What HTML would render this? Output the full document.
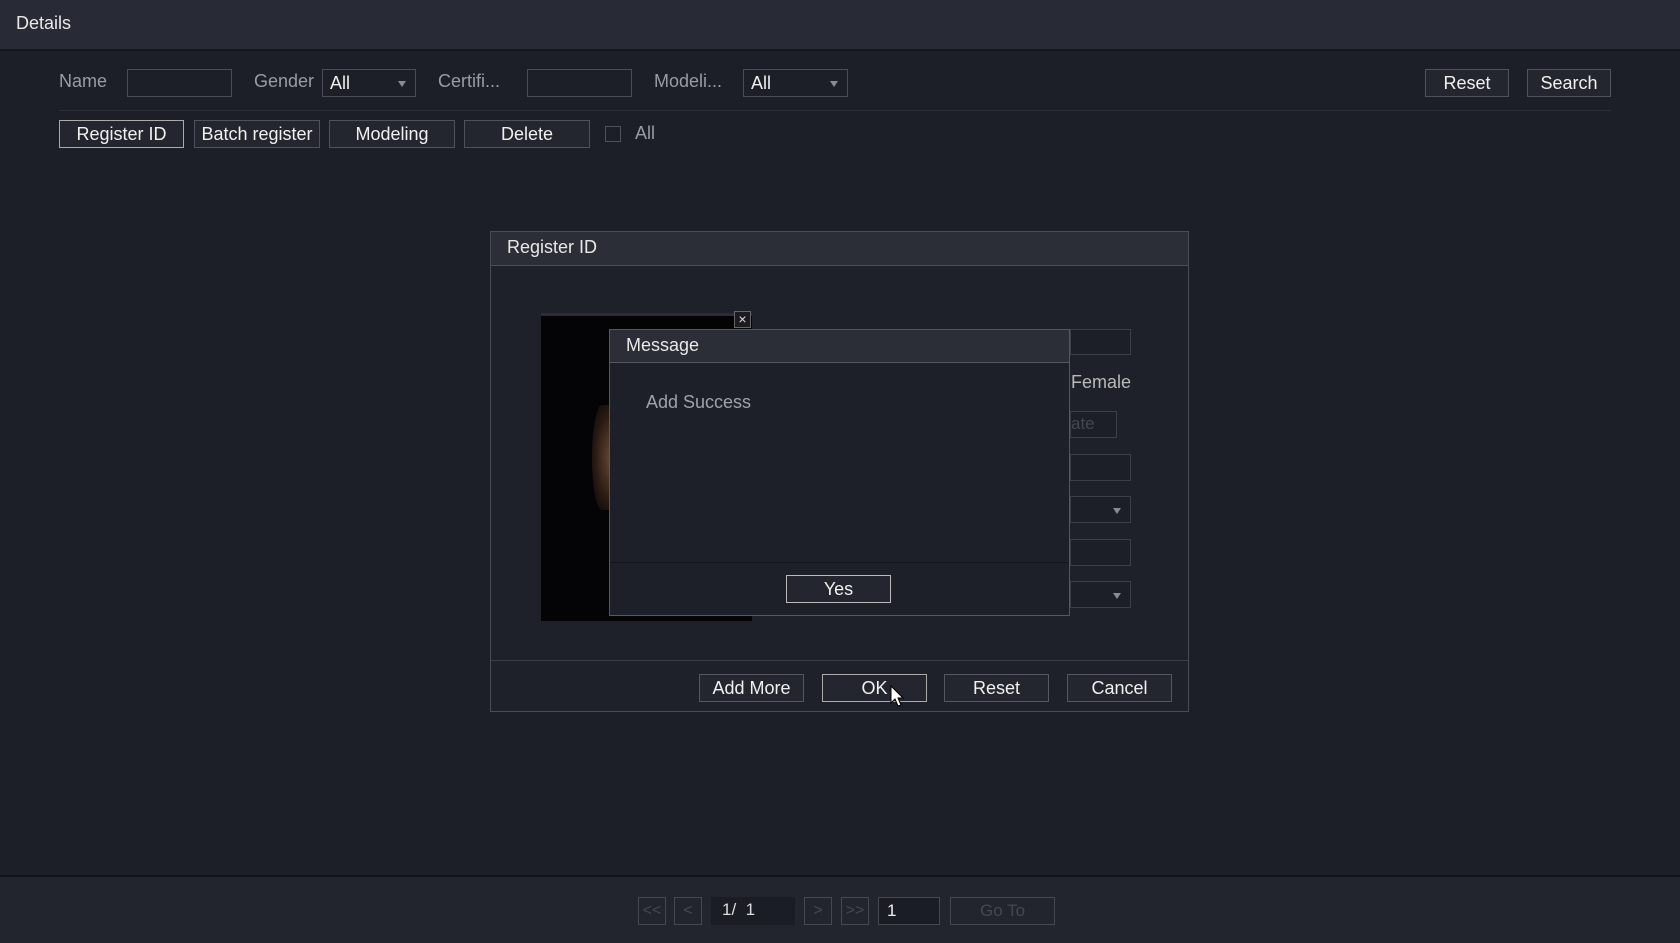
<!DOCTYPE html>
<html><head><meta charset="utf-8"><style>
*{box-sizing:border-box;margin:0;padding:0}
body{width:1680px;height:943px;overflow:hidden;background:#1c1f27;font-family:"Liberation Sans",sans-serif;color:#e8e8e8;position:relative;font-size:17px}
.a{position:absolute}
.hdr{left:0;top:0;width:1680px;height:51px;background:#282b35;border-bottom:2px solid #14161b}
.lbl{color:#9a9ca3;font-size:18px}
.inp{border:1px solid #4a4d55;background:#1c1f27}
.btn{border:1px solid #6c6f76;background:#23262e;color:#f0f0f0;text-align:center;font-size:18px;line-height:26px}
.sel:after{content:"";position:absolute;right:9px;top:11px;border:4px solid transparent;border-top:6px solid #8a8c92}
.dis{border:1px solid #45484f;color:#45484f;text-align:center;line-height:26px;font-size:16px}
</style></head><body>
<div class="a hdr"></div>
<div class="a" style="left:16px;top:13px;font-size:18px">Details</div>

<div class="a lbl" style="left:59px;top:71px">Name</div>
<div class="a inp" style="left:127px;top:69px;width:105px;height:28px"></div>
<div class="a lbl" style="left:254px;top:71px">Gender</div>
<div class="a inp sel" style="left:322px;top:69px;width:94px;height:28px;padding:3px 7px;font-size:18px;color:#eee">All</div>
<div class="a lbl" style="left:438px;top:71px">Certifi...</div>
<div class="a inp" style="left:527px;top:69px;width:105px;height:28px"></div>
<div class="a lbl" style="left:654px;top:71px">Modeli...</div>
<div class="a inp sel" style="left:743px;top:69px;width:105px;height:28px;padding:3px 7px;font-size:18px;color:#eee">All</div>
<div class="a btn" style="left:1425px;top:69px;width:84px;height:28px;border-color:#4f525a">Reset</div>
<div class="a btn" style="left:1527px;top:69px;width:84px;height:28px;border-color:#4f525a">Search</div>
<div class="a" style="left:59px;top:110px;width:1552px;height:1px;background:#2c2f37"></div>

<div class="a btn" style="left:59px;top:120px;width:125px;height:28px;border-color:#aaa">Register ID</div>
<div class="a btn" style="left:194px;top:120px;width:126px;height:28px;border-color:#4f525a">Batch register</div>
<div class="a btn" style="left:329px;top:120px;width:126px;height:28px;border-color:#4f525a">Modeling</div>
<div class="a btn" style="left:464px;top:120px;width:126px;height:28px;border-color:#4f525a">Delete</div>
<div class="a" style="left:605px;top:126px;width:16px;height:16px;border:1px solid #4f525a"></div>
<div class="a lbl" style="left:635px;top:123px">All</div>

<!-- Register dialog -->
<div class="a" style="left:490px;top:231px;width:699px;height:481px;background:#1e212a;border:1px solid #4a4d55"></div>
<div class="a" style="left:491px;top:232px;width:697px;height:34px;background:#2b2e37;border-bottom:1px solid #4a4d55"></div>
<div class="a" style="left:507px;top:237px;font-size:18px">Register ID</div>
<div class="a" style="left:491px;top:660px;width:697px;height:1px;background:#3a3d45"></div>
<div class="a btn" style="left:699px;top:674px;width:105px;height:28px;border-color:#55585f">Add More</div>
<div class="a btn" style="left:822px;top:674px;width:105px;height:28px;border-color:#aaa">OK</div>
<div class="a btn" style="left:944px;top:674px;width:105px;height:28px;border-color:#55585f">Reset</div>
<div class="a btn" style="left:1067px;top:674px;width:105px;height:28px;border-color:#55585f">Cancel</div>
<svg class="a" style="left:890px;top:685px" width="16" height="24" viewBox="0 0 16 24"><path d="M1 1 L1 18 L5 14 L8 21 L11 20 L8 13 L13 13 Z" fill="#fff" stroke="#000" stroke-width="1"/></svg>

<div class="a" style="left:541px;top:313px;width:211px;height:308px;background:#040406;border-top:3px solid #2a2d35"></div>
<div class="a" style="left:592px;top:405px;width:20px;height:105px;background:radial-gradient(ellipse at 100% 50%,#6a4a38,#2a1a12 60%,#050505);border-radius:60% 0 0 60%"></div>
<div class="a" style="left:734px;top:311px;width:17px;height:17px;border:1px solid #666;background:#1a1c22;color:#ddd;font-size:14px;line-height:15px;text-align:center">×</div>

<div class="a inp" style="left:1070px;top:329px;width:61px;height:26px;border-color:#3c3f47"></div>
<div class="a" style="left:1071px;top:372px;font-size:18px;color:#b8b9bd">Female</div>
<div class="a inp" style="left:1070px;top:411px;width:47px;height:27px;border-color:#3c3f47;color:#44474e;font-size:17px;padding:2px 0 0 0">ate</div>
<div class="a inp" style="left:1070px;top:454px;width:61px;height:27px;border-color:#3c3f47"></div>
<div class="a inp sel" style="left:1070px;top:496px;width:61px;height:27px;border-color:#3c3f47"></div>
<div class="a inp" style="left:1070px;top:539px;width:61px;height:27px;border-color:#3c3f47"></div>
<div class="a inp sel" style="left:1070px;top:581px;width:61px;height:27px;border-color:#3c3f47"></div>

<!-- Message -->
<div class="a" style="left:609px;top:329px;width:461px;height:287px;background:#1d2029;border:1px solid #55585f"></div>
<div class="a" style="left:610px;top:330px;width:459px;height:33px;background:#2b2e37;border-bottom:1px solid #55585f"></div>
<div class="a" style="left:626px;top:335px;font-size:18px">Message</div>
<div class="a" style="left:646px;top:392px;font-size:18px;color:#a0a2a8">Add Success</div>
<div class="a" style="left:610px;top:562px;width:459px;height:1px;background:#14161b"></div>
<div class="a btn" style="left:786px;top:575px;width:105px;height:28px;border-color:#bbb">Yes</div>

<!-- footer -->
<div class="a" style="left:0;top:875px;width:1680px;height:2px;background:#121318"></div>
<div class="a" style="left:0;top:877px;width:1680px;height:66px;background:#22252e"></div>
<div class="a dis" style="left:638px;top:897px;width:28px;height:28px">&lt;&lt;</div>
<div class="a dis" style="left:674px;top:897px;width:28px;height:28px">&lt;</div>
<div class="a" style="left:711px;top:897px;width:84px;height:28px;background:#1b1d24;color:#ddd;font-size:17px;padding:3px 11px">1/&nbsp; 1</div>
<div class="a dis" style="left:804px;top:897px;width:28px;height:28px">&gt;</div>
<div class="a dis" style="left:841px;top:897px;width:28px;height:28px">&gt;&gt;</div>
<div class="a" style="left:878px;top:897px;width:62px;height:28px;background:#1b1d24;border:1px solid #45484f;color:#eee;font-size:17px;padding:3px 8px">1</div>
<div class="a dis" style="left:950px;top:897px;width:105px;height:28px;font-size:17px">Go To</div>
</body></html>
